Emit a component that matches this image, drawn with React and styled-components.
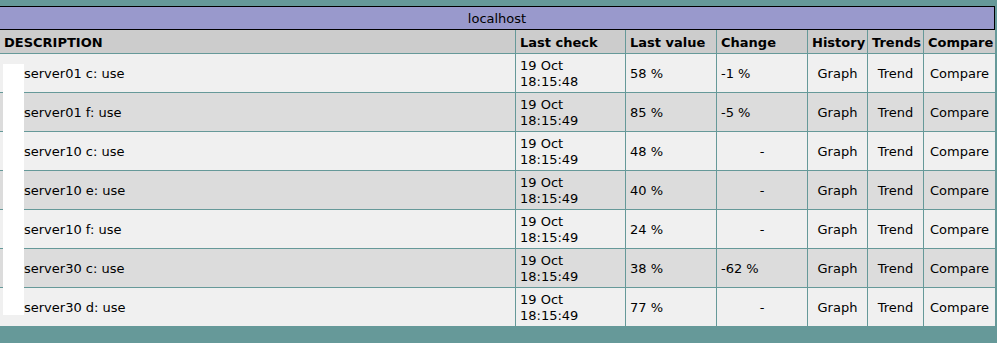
import React from 'react'
import { styled, createGlobalStyle } from 'styled-components'

const rows = [
  { desc: 'server01 c: use', date: '19 Oct', time: '18:15:48', value: '58 %', change: '-1 %' },
  { desc: 'server01 f: use', date: '19 Oct', time: '18:15:49', value: '85 %', change: '-5 %' },
  { desc: 'server10 c: use', date: '19 Oct', time: '18:15:49', value: '48 %', change: '-' },
  { desc: 'server10 e: use', date: '19 Oct', time: '18:15:49', value: '40 %', change: '-' },
  { desc: 'server10 f: use', date: '19 Oct', time: '18:15:49', value: '24 %', change: '-' },
  { desc: 'server30 c: use', date: '19 Oct', time: '18:15:49', value: '38 %', change: '-62 %' },
  { desc: 'server30 d: use', date: '19 Oct', time: '18:15:49', value: '77 %', change: '-' },
]

const columns = ['DESCRIPTION', 'Last check', 'Last value', 'Change', 'History', 'Trends', 'Compare']

const App = () => {
  return (
    <Page>
      <GlobalStyle />
      <TitleBar>localhost</TitleBar>
      <Table>
        <Row>
          {columns.map(c => <HeadCell key={c}>{c}</HeadCell>)}
        </Row>
        {rows.map((r, i) => (
          <Row key={r.desc}>
            <Cell dark={i % 2 === 1} desc>{r.desc}</Cell>
            <Cell dark={i % 2 === 1}>{r.date}<br />{r.time}</Cell>
            <Cell dark={i % 2 === 1}>{r.value}</Cell>
            <Cell dark={i % 2 === 1} center={r.change === '-'}>{r.change}</Cell>
            <Cell dark={i % 2 === 1} center>Graph</Cell>
            <Cell dark={i % 2 === 1} center>Trend</Cell>
            <Cell dark={i % 2 === 1} center>Compare</Cell>
          </Row>
        ))}
      </Table>
      <Blank />
    </Page>
  )
}

const GlobalStyle = createGlobalStyle`
  body {
    margin: 0;
    background: #669999;
    font-family: "DejaVu Sans", Verdana, sans-serif;
    font-size: 13px;
    color: #000;
  }
`
const Page = styled.div`
  position: relative;
  padding-top: 6px;
  width: 997px;
  height: 343px;
  box-sizing: border-box;
`
const TitleBar = styled.div`
  width: 995px;
  height: 24px;
  box-sizing: border-box;
  border: 1px solid #000;
  border-left: none;
  background: #9999cc;
  display: flex;
  align-items: center;
  justify-content: center;
  padding-top: 1px;
`
const Table = styled.div`
  width: 995px;
  display: flex;
  flex-direction: column;
  gap: 1px;
`
const Row = styled.div`
  display: grid;
  grid-template-columns: 515px 109px 90px 90px 59px 55px 71px;
  column-gap: 1px;
`
const HeadCell = styled.div`
  height: 23px;
  box-sizing: border-box;
  background: #cccccc;
  font-weight: bold;
  display: flex;
  align-items: center;
  padding: 2px 4px 0 4px;
  white-space: nowrap;
  overflow: hidden;
`
const Cell = styled.div`
  height: 38px;
  box-sizing: border-box;
  background: ${p => (p.dark ? '#dcdcdc' : '#f0f0f0')};
  display: flex;
  flex-direction: column;
  justify-content: center;
  align-items: ${p => (p.center ? 'center' : 'flex-start')};
  padding-top: 2px;
  padding-left: ${p => (p.desc ? '24px' : '4px')};
  padding-right: ${p => (p.center ? '4px' : '0')};
  line-height: 16px;
  white-space: nowrap;
`
const Blank = styled.div`
  position: absolute;
  left: 3px;
  top: 64px;
  width: 21px;
  height: 251px;
  background: #fff;
`

export default App
